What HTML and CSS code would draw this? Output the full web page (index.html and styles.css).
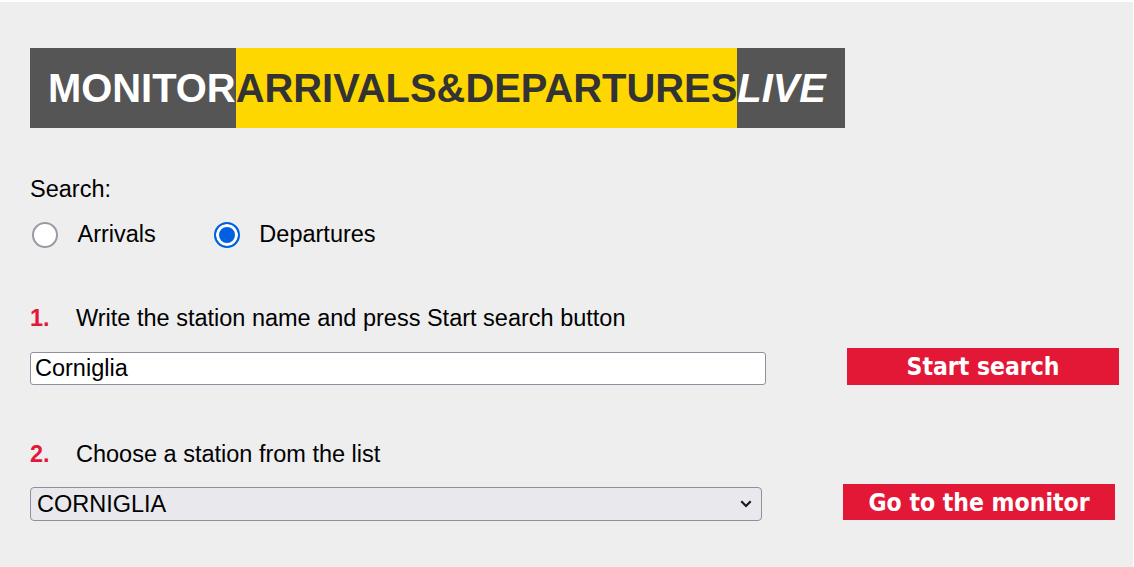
FILE: index.html
```html
<!DOCTYPE html>
<html lang="en">
<head>
<meta charset="utf-8">
<title>Monitor Arrivals &amp; Departures Live</title>
<link rel="stylesheet" href="styles.css">
</head>
<body>
<div class="page">
  <h1 class="brand"><span class="brand-grey">MONITOR</span><span class="brand-yellow">ARRIVALS&amp;DEPARTURES</span><span class="brand-live">LIVE</span></h1>

  <div class="search-label">Search:</div>
  <div class="radio-row">
    <label class="radio-opt"><input type="radio" name="mode" class="radio"><span>Arrivals</span></label>
    <label class="radio-opt"><input type="radio" name="mode" class="radio" checked><span>Departures</span></label>
  </div>

  <div class="step step-1"><span class="step-num">1.</span><span>Write the station name and press Start search button</span></div>
  <div class="field-row field-row-1">
    <input type="text" class="text-input" value="Corniglia">
    <button class="red-btn">Start search</button>
  </div>

  <div class="step step-2"><span class="step-num">2.</span><span>Choose a station from the list</span></div>
  <div class="field-row field-row-2">
    <select class="station-select"><option>CORNIGLIA</option></select>
    <button class="red-btn red-btn-2">Go to the monitor</button>
  </div>
</div>
</body>
</html>
```
FILE: styles.css
```css
html { background: #ffffff; }
body {
  margin: 2px 1px 0 0;
  font-family: "Liberation Sans", Arial, sans-serif;
  color: #000;
}
.page {
  background: #eeeeee;
  min-height: 565px;
  padding: 46px 0 0 30px;
  box-sizing: border-box;
  font-size: 23.5px;
  line-height: 27px;
}
.brand {
  display: inline-flex;
  margin: 0;
  height: 80px;
  font-size: 39.9px;
  line-height: 80px;
  font-weight: bold;
}
.brand-grey {
  background: #555555;
  color: #ffffff;
  padding-left: 18px;
}
.brand-yellow {
  background: #ffd700;
  color: #333333;
}
.brand-live {
  background: #555555;
  color: #ffffff;
  font-style: italic;
  padding-right: 19px;
}
.search-label {
  margin-top: 48px;
}
.radio-row {
  display: flex;
  margin-top: 18px;
  gap: 56px;
}
.radio-opt {
  display: flex;
  align-items: center;
  gap: 19.5px;
}
.radio {
  appearance: none;
  margin: 0 0 0 2px;
  width: 26px;
  height: 26px;
  border-radius: 50%;
  border: 2px solid #9a9aa6;
  background: #ffffff;
  box-sizing: border-box;
}
.radio:checked {
  border-color: #0060df;
  background: #0060df;
  box-shadow: inset 0 0 0 3px #ffffff;
}
.step {
  display: flex;
}
.step-1 { margin-top: 57px; }
.step-2 { margin-top: 52px; }
.step-num {
  width: 46px;
  color: #e31837;
  font-weight: bold;
}
.field-row {
  display: flex;
  align-items: center;
  gap: 81px;
}
.field-row-1 { margin-top: 16px; }
.field-row-2 { margin-top: 16px; }
.text-input {
  width: 736px;
  height: 33px;
  box-sizing: border-box;
  border: 1px solid #8f8f9d;
  border-radius: 3px;
  background: #ffffff;
  padding: 0 4px;
  font-family: "Liberation Sans", Arial, sans-serif;
  font-size: 23.5px;
  color: #000;
  margin: 0;
}
.station-select {
  appearance: none;
  width: 732px;
  height: 34px;
  box-sizing: border-box;
  border: 1px solid #8f8f9d;
  border-radius: 4px;
  background-color: #e9e9ed;
  background-image: url("data:image/svg+xml;utf8,<svg xmlns='http://www.w3.org/2000/svg' width='12' height='8' viewBox='0 0 12 8'><path d='M1.3 1.3 6 6 10.7 1.3' fill='none' stroke='%231b1b1b' stroke-width='2.2'/></svg>");
  background-repeat: no-repeat;
  background-position: right 9px center;
  padding: 0 6px;
  font-family: "Liberation Sans", Arial, sans-serif;
  font-size: 23.5px;
  color: #000;
  margin: 0;
}
.red-btn {
  width: 272px;
  height: 37px;
  margin: 0 0 4px 0;
  border: none;
  background: #e31837;
  color: #ffffff;
  font-family: "DejaVu Sans", Verdana, sans-serif;
  font-stretch: condensed;
  font-weight: bold;
  font-size: 24.5px;
  padding: 0;
}
.red-btn-2 { height: 36px; }
```
